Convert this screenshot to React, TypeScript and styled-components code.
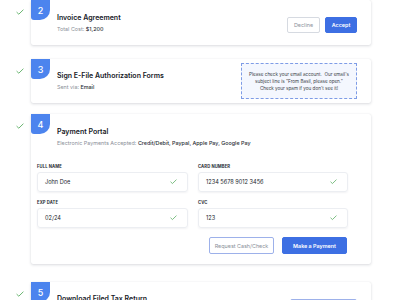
import React from "react";
import styled, { createGlobalStyle } from "styled-components";

const GlobalStyle = createGlobalStyle`
  body {
    margin: 0;
    background: #ffffff;
    font-family: Inter, "Liberation Sans", sans-serif;
    color: #1f2329;
  }
`;

const Page = styled.div`
  width: 400px;
  height: 300px;
  overflow: hidden;
  padding-left: 8px;
  box-sizing: border-box;
`;

const Step = styled.div<{ $space: number }>`
  display: flex;
  align-items: flex-start;
  margin-top: ${(p) => p.$space}px;
`;

const CheckCol = styled.div`
  width: 23px;
  padding-top: 9px;
  display: flex;
  justify-content: center;
  flex-shrink: 0;
`;

const Card = styled.div<{ $height?: number }>`
  position: relative;
  width: 340px;
  height: ${(p) => (p.$height ? `${p.$height}px` : "auto")};
  background: #ffffff;
  border-radius: 2px;
  box-shadow: 0 1px 3px rgba(30, 40, 60, 0.16), 0 0 1px rgba(30, 40, 60, 0.1);
  box-sizing: border-box;
`;

const Badge = styled.div`
  position: absolute;
  left: 0;
  top: 0;
  width: 19px;
  height: 20px;
  background: #4c84ee;
  color: #ffffff;
  font-size: 9px;
  font-weight: 500;
  display: flex;
  align-items: center;
  justify-content: center;
  border-radius: 0 0 10px 3px;
`;

const Header = styled.div<{ $height: number }>`
  display: flex;
  align-items: center;
  justify-content: space-between;
  height: ${(p) => p.$height}px;
  padding: 0 14px 0 26px;
`;

const TextBlock = styled.div`
  display: flex;
  flex-direction: column;
  gap: 2px;
`;

const Title = styled.div`
  font-size: 7px;
  font-weight: 600;
  line-height: 10px;
  color: #16191f;
`;

const Sub = styled.div`
  font-size: 5.4px;
  line-height: 8px;
  color: #8b9099;

  b {
    font-weight: 500;
    color: #2a2e36;
  }
`;

const Actions = styled.div<{ $offset?: number }>`
  display: flex;
  gap: 5px;
  margin-top: ${(p) => p.$offset ?? 0}px;
`;

const Button = styled.button<{ $variant: "primary" | "ghost" | "outline"; $w: number; $h: number }>`
  width: ${(p) => p.$w}px;
  height: ${(p) => p.$h}px;
  padding: 0;
  font-family: inherit;
  font-size: 5.4px;
  font-weight: ${(p) => (p.$variant === "primary" ? 600 : 400)};
  border-radius: 2px;
  cursor: pointer;
  background: ${(p) => (p.$variant === "primary" ? "#3d6fe3" : "#ffffff")};
  color: ${(p) => (p.$variant === "primary" ? "#ffffff" : "#8a8f99")};
  border: 1px solid
    ${(p) =>
      p.$variant === "primary" ? "#3d6fe3" : p.$variant === "outline" ? "#9db1ea" : "#d6dae1"};
`;

const Notice = styled.div`
  width: 116px;
  height: 36px;
  box-sizing: border-box;
  background: #f4f7fe;
  border: 1px dashed #7e9ce6;
  font-size: 4.6px;
  line-height: 7px;
  color: #3a3f48;
  text-align: center;
  display: flex;
  align-items: center;
  justify-content: center;
  padding: 0 3px;
  white-space: nowrap;
`;

const Form = styled.div`
  display: grid;
  grid-template-columns: 151px 150px;
  column-gap: 10px;
  row-gap: 8px;
  padding: 4px 0 0 6px;
`;

const Field = styled.div`
  display: flex;
  flex-direction: column;
  gap: 3px;
`;

const Label = styled.div`
  font-size: 4.2px;
  font-weight: 700;
  letter-spacing: 0.1px;
  color: #2a2e36;
  text-transform: uppercase;
  line-height: 5px;
`;

const Input = styled.div`
  height: 20px;
  box-sizing: border-box;
  border: 1px solid #eceef2;
  border-radius: 3px;
  box-shadow: 0 1px 2px rgba(30, 40, 60, 0.06);
  display: flex;
  align-items: center;
  justify-content: space-between;
  padding: 0 10px 0 7px;
  font-size: 5.6px;
  color: #23272e;
`;

const Footer = styled.div`
  display: flex;
  justify-content: flex-end;
  gap: 8px;
  padding: 9px 24px 10px 0;
`;

const Check = ({ size = 8 }: { size?: number }) => (
  <svg width={size} height={size * 0.75} viewBox="0 0 8 6">
    <polyline points="0.6,3.1 2.8,5.2 7.4,0.7" fill="none" stroke="#5aae62" strokeWidth="0.9" />
  </svg>
);

const fields = [
  { label: "Full Name", value: "John Doe" },
  { label: "Card Number", value: "1234 5678 9012 3456" },
  { label: "Exp Date", value: "02/24" },
  { label: "CVC", value: "123" },
];

const App = () => {
  return (
    <Page>
      <GlobalStyle />
      <Step $space={0}>
        <CheckCol>
          <Check />
        </CheckCol>
        <Card $height={45}>
          <Badge>2</Badge>
          <Header $height={45}>
            <TextBlock>
              <Title>Invoice Agreement</Title>
              <Sub>
                Total Cost: <b>$1,200</b>
              </Sub>
            </TextBlock>
            <Actions $offset={4}>
              <Button $variant="ghost" $w={33} $h={16}>
                Decline
              </Button>
              <Button $variant="primary" $w={32} $h={16}>
                Accept
              </Button>
            </Actions>
          </Header>
        </Card>
      </Step>

      <Step $space={14}>
        <CheckCol>
          <Check />
        </CheckCol>
        <Card $height={44}>
          <Badge>3</Badge>
          <Header $height={44}>
            <TextBlock>
              <Title>Sign E-File Authorization Forms</Title>
              <Sub>
                Sent via: <b>Email</b>
              </Sub>
            </TextBlock>
            <Notice>
              Please check your email account.&nbsp; Our email's
              <br />
              subject line is "From Basil, please open."
              <br />
              Check your spam if you don't see it!
            </Notice>
          </Header>
        </Card>
      </Step>

      <Step $space={11}>
        <CheckCol>
          <Check />
        </CheckCol>
        <Card>
          <Badge>4</Badge>
          <Header $height={46}>
            <TextBlock>
              <Title>Payment Portal</Title>
              <Sub>
                Electronic Payments Accepted: <b>Credit/Debit, Paypal, Apple Pay, Google Pay</b>
              </Sub>
            </TextBlock>
          </Header>
          <Form>
            {fields.map((f) => (
              <Field key={f.label}>
                <Label>{f.label}</Label>
                <Input>
                  <span>{f.value}</span>
                  <Check size={7} />
                </Input>
              </Field>
            ))}
          </Form>
          <Footer>
            <Button $variant="outline" $w={65} $h={17}>
              Request Cash/Check
            </Button>
            <Button $variant="primary" $w={65} $h={17}>
              Make a Payment
            </Button>
          </Footer>
        </Card>
      </Step>

      <Step $space={18}>
        <CheckCol>
          <Check />
        </CheckCol>
        <Card $height={40}>
          <Badge>5</Badge>
          <Header $height={34}>
            <Title>Download Filed Tax Return</Title>
            <Actions $offset={17}>
              <Button $variant="outline" $w={67} $h={17} aria-label="Download" />
            </Actions>
          </Header>
        </Card>
      </Step>
    </Page>
  );
};

export default App;
